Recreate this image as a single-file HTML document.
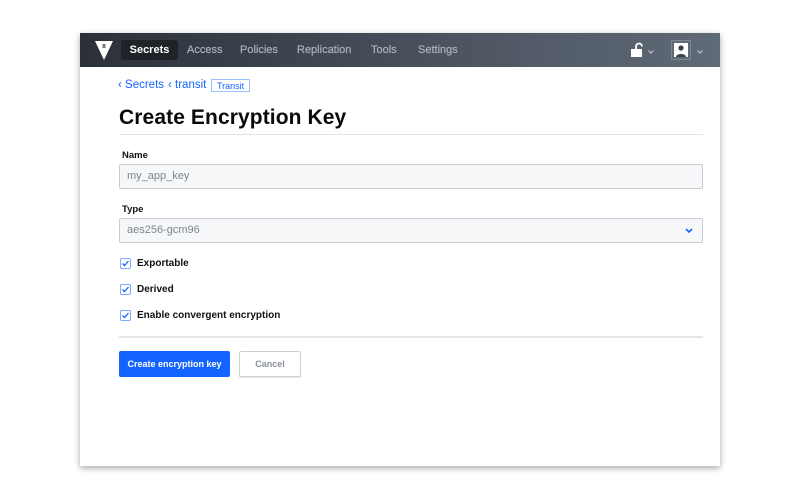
<!DOCTYPE html>
<html><head><meta charset="utf-8"><style>
*{box-sizing:border-box;margin:0;padding:0}
body{width:800px;height:500px;background:#fff;font-family:"Liberation Sans",sans-serif;position:relative;overflow:hidden}
.card{position:absolute;left:80px;top:33px;width:640px;height:433px;background:#fff;box-shadow:0 2px 6px rgba(0,0,0,.35)}
.nav{position:absolute;left:0;top:0;width:640px;height:34px;background:linear-gradient(90deg,#2b3038,#4d5561 60%,#5f6a77)}
.nav .item{position:absolute;top:1px;height:34px;line-height:33px;font-size:11px;color:#aab1bb;-webkit-text-stroke:.2px #aab1bb}
.nav .sel{position:absolute;left:41px;top:7px;width:57px;height:20px;background:#1f2226;border-radius:3px;color:#fff;font-size:11px;line-height:20px;text-align:center;font-weight:bold}
.bc{position:absolute;top:46px;font-size:11.5px;color:#1563ff}
.tag{position:absolute;left:131px;top:46px;border:1px solid #99c0ff;color:#1563ff;font-size:9px;padding:1px 5px;height:13px;line-height:10px}
h1{position:absolute;left:39px;top:73px;font-size:21px;font-weight:bold;color:#0a0a0a;letter-spacing:.1px}
.hr{position:absolute;left:39px;width:584px;height:1px;background:#e0e3e8}
.lbl{position:absolute;left:42px;font-size:9.5px;font-weight:bold;color:#111}
.inp{position:absolute;left:39px;width:584px;height:25px;background:#f6f7f8;border:1px solid #c8ccd3;border-radius:2px;font-size:11px;color:#7d8591;line-height:23px;padding-left:7px}
.cb{position:absolute;left:40px;width:11px;height:11px;border:1px solid #7aa9ff;border-radius:2px;background:#fff}
.cbl{position:absolute;left:57px;font-size:10px;font-weight:bold;color:#111}
.btn{position:absolute;top:318px;height:26px;font-size:9px;font-weight:bold;text-align:center;line-height:26px;border-radius:2px}
</style></head><body>
<div class="card">
 <div class="nav">
  <svg style="position:absolute;left:15px;top:8px" width="18" height="19" viewBox="0 0 18 19"><path d="M0 0H18L9 19Z" fill="#fff"/><rect x="7.5" y="3" width="3" height="4" fill="#777"/></svg>
  <div class="sel">Secrets</div>
  <div class="item" style="left:107px">Access</div>
  <div class="item" style="left:160px">Policies</div>
  <div class="item" style="left:217px">Replication</div>
  <div class="item" style="left:291px">Tools</div>
  <div class="item" style="left:338px">Settings</div>
  <svg style="position:absolute;left:550px;top:9px" width="14" height="16" viewBox="0 0 14 16"><path d="M4 7V4.5a3 3 0 0 1 6 0" stroke="#fff" stroke-width="1.8" fill="none" transform="translate(2,0)"/><rect x="1" y="7" width="11" height="8" fill="#fff"/></svg>
  <svg style="position:absolute;left:568px;top:17px" width="6" height="4" viewBox="0 0 6 4"><path d="M.5.5l2.5 2.5 2.5-2.5" stroke="#ccd" fill="none"/></svg>
  <svg style="position:absolute;left:591px;top:7px" width="20" height="20" viewBox="0 0 20 20"><rect x=".5" y=".5" width="19" height="19" fill="#606a76" stroke="#7c8590"/><rect x="3" y="3" width="14" height="14" fill="#fff"/><circle cx="10" cy="8" r="2.6" fill="#3a4048"/><path d="M5 17c0-4 10-4 10 0Z" fill="#3a4048"/></svg>
  <svg style="position:absolute;left:617px;top:17px" width="6" height="4" viewBox="0 0 6 4"><path d="M.5.5l2.5 2.5 2.5-2.5" stroke="#ccd" fill="none"/></svg>
 </div>
 <div class="bc" style="left:38px">&#8249; Secrets</div>
 <div class="bc" style="left:88px">&#8249; transit</div>
 <div class="tag">Transit</div>
 <h1>Create Encryption Key</h1>
 <div class="hr" style="top:101px"></div>
 <div class="lbl" style="top:117px">Name</div>
 <div class="inp" style="top:131px">my_app_key</div>
 <div class="lbl" style="top:171px">Type</div>
 <div class="inp" style="top:185px">aes256-gcm96<svg style="position:absolute;right:9px;top:9px" width="8" height="6" viewBox="0 0 8 6"><path d="M1 1l3 3 3-3" stroke="#1563ff" stroke-width="1.6" fill="none"/></svg></div>
 <div class="cb" style="top:225px"><svg width="9" height="9" viewBox="0 0 9 9" style="position:absolute;left:0;top:0"><path d="M1.5 4.5l2 2 4-4.5" stroke="#1563ff" stroke-width="1.3" fill="none"/></svg></div>
 <div class="cbl" style="top:225px">Exportable</div>
 <div class="cb" style="top:251px"><svg width="9" height="9" viewBox="0 0 9 9" style="position:absolute;left:0;top:0"><path d="M1.5 4.5l2 2 4-4.5" stroke="#1563ff" stroke-width="1.3" fill="none"/></svg></div>
 <div class="cbl" style="top:251px">Derived</div>
 <div class="cb" style="top:277px"><svg width="9" height="9" viewBox="0 0 9 9" style="position:absolute;left:0;top:0"><path d="M1.5 4.5l2 2 4-4.5" stroke="#1563ff" stroke-width="1.3" fill="none"/></svg></div>
 <div class="cbl" style="top:277px">Enable convergent encryption</div>
 <div class="hr" style="top:303px;height:2px;background:#e3e6ea"></div>
 <div class="btn" style="left:39px;width:111px;background:#1563ff;color:#fff">Create encryption key</div>
 <div class="btn" style="left:159px;width:62px;background:#fff;border:1px solid #ccd0d6;color:#8a9099;line-height:24px;box-shadow:0 1px 1px rgba(0,0,0,.1)">Cancel</div>
</div>
</body></html>
